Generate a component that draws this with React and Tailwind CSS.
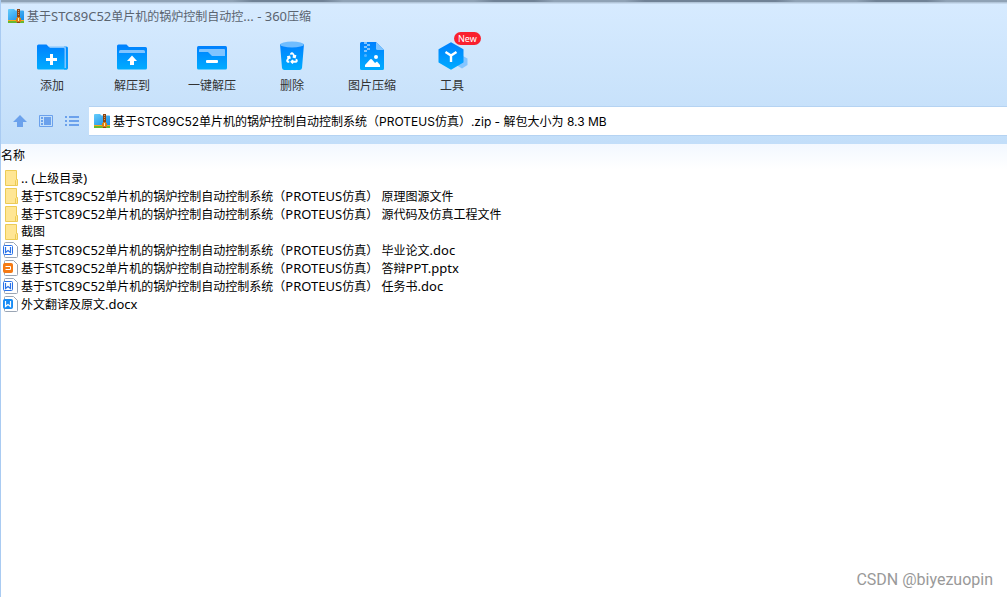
import { useState } from 'react';

const ZipIcon = () => (
  <svg width="16" height="16" viewBox="0 0 16 16" className="shrink-0" aria-hidden="true">
    <defs>
      <linearGradient id="zipBlue" x1="0" y1="0" x2="1" y2="1">
        <stop offset="0" stopColor="#66cdfb" />
        <stop offset="1" stopColor="#158ae6" />
      </linearGradient>
    </defs>
    <path d="M0 2a1 1 0 0 1 1-1h5l1.5 1.5H15a1 1 0 0 1 1 1V12H0z" fill="url(#zipBlue)" />
    <path d="M0 12h16v1H0z" fill="#f6a81c" />
    <path d="M0 13h16v2H0z" fill="#66b82e" />
    <path d="M9 1h3v14H9z" fill="#8b4513" />
    <path d="M10 2h1v1h-1zM10 4h1v1h-1zM10 6h1v1h-1z" fill="#d99a5e" />
    <path d="M9 9h3v1h1v4H8v-4h1z" fill="#d97f16" />
    <path d="M10 10h1v3h-1z" fill="#fff0b3" />
  </svg>
);

const IconDefs = () => (
  <svg width="0" height="0" className="absolute" aria-hidden="true">
    <defs>
      <linearGradient id="toolBlue" x1="0" y1="0" x2="0" y2="1">
        <stop offset="0" stopColor="#0080fe" />
        <stop offset="1" stopColor="#00acff" />
      </linearGradient>
    </defs>
  </svg>
);

const icons = {
  add: (
    <>
      <path d="M28 4.5h2.5A1.5 1.5 0 0 1 32 6v20a1.5 1.5 0 0 1-1.5 1.5H28z" fill="#0a97ff" />
      <path d="M1 4a1.5 1.5 0 0 1 1.5-1.5h8L13 5h17a1 1 0 0 1 1 1v21.5H2.5A1.5 1.5 0 0 1 1 26z" fill="url(#toolBlue)" />
      <path d="M12.5 4.5h16A1.5 1.5 0 0 1 30 6v20h-1.5V7a1 1 0 0 0-1-1H14z" fill="#80c4ff" />
      <path d="M14 12h3v4h4v3h-4v4h-3v-4h-4v-3h4z" fill="#fff" />
    </>
  ),
  extract: (
    <>
      <path d="M1 4a1.5 1.5 0 0 1 1.5-1.5h8L13 5h16.5A1.5 1.5 0 0 1 31 6.5V26a1.5 1.5 0 0 1-1.5 1.5h-27A1.5 1.5 0 0 1 1 26z" fill="url(#toolBlue)" />
      <path d="M3 11V9.5A1.5 1.5 0 0 1 4.5 8h23A1.5 1.5 0 0 1 29 9.5V11z" fill="#80c4ff" />
      <path d="m16 13.5 5 5.5h-3v4h-4v-4h-3z" fill="#fff" />
    </>
  ),
  oneKey: (
    <>
      <rect x="1" y="4" width="30" height="23.5" rx="1.5" fill="url(#toolBlue)" />
      <path d="M3 10V8a1 1 0 0 1 1-1h24a1 1 0 0 1 1 1v6H16l-4-4z" fill="#80c4ff" />
      <rect x="10" y="18" width="12" height="3" rx="1" fill="#fff" />
    </>
  ),
  remove: (
    <>
      <path d="M4 2h24l-2 24a2.5 2.5 0 0 1-2.5 2h-15A2.5 2.5 0 0 1 6 26z" fill="url(#toolBlue)" />
      <ellipse cx="16" cy="2.5" rx="12" ry="3" fill="#70bdff" />
      <g transform="translate(9.5 9.5) scale(.54)" fill="none" stroke="#fff" strokeWidth="3.4">
        <path d="M7 19H4.815a1.83 1.83 0 0 1-1.57-.881 1.785 1.785 0 0 1-.004-1.784L7.196 9.5" />
        <path d="M11 19h8.203a1.83 1.83 0 0 0 1.556-.89 1.784 1.784 0 0 0 0-1.775l-1.226-2.12" />
        <path d="m14 16-3 3 3 3M8.293 13.596 7.196 9.5 3.1 10.598" />
        <path d="m9.344 5.811 1.093-1.892A1.83 1.83 0 0 1 11.985 3a1.784 1.784 0 0 1 1.546.888l3.943 6.843" />
        <path d="m13.378 9.633 4.096 1.098 1.097-4.096" />
      </g>
    </>
  ),
  image: (
    <>
      <path d="M4 1.5A1.5 1.5 0 0 1 5.5 0H20l8 8v18.5a1.5 1.5 0 0 1-1.5 1.5h-21A1.5 1.5 0 0 1 4 26.5z" fill="url(#toolBlue)" />
      <path d="M20 0l8 8h-6.5A1.5 1.5 0 0 1 20 6.5z" fill="#80c4ff" />
      <path d="M8 0h3v2H8zM11 2h3v2h-3zM8 4h3v2H8zM11 6h3v2h-3zM8 8h3v2H8z" fill="#80c4ff" />
      <circle cx="9.5" cy="13.5" r="1.5" fill="#4db2ff" />
      <circle cx="20" cy="15" r="2" fill="#fff" />
      <path d="M9 25v-2l5-5.5q1-1 2 0l3 3.5 2-1.5 3 3.5v2z" fill="#fff" />
    </>
  ),
  tools: (
    <>
      <path d="m26 13.5 5.5 3V23L26 26.5l-5-3z" fill="#85c5ff" />
      <path d="M14.5.5q.5-.3 1 0L27 7q.5.3.5.8V20q0 .5-.5.8l-11.5 6.7q-.5.3-1 0L3 20.8q-.5-.3-.5-.8V7.8q0-.5.5-.8z" fill="url(#toolBlue)" />
      <path d="m9.5 10 5.5 3.5 5.5-3.5M15 13.5V20" fill="none" stroke="#fff" strokeWidth="2.4" />
    </>
  ),
};

const tools = [
  { id: 'add', label: '添加' },
  { id: 'extract', label: '解压到' },
  { id: 'oneKey', label: '一键解压' },
  { id: 'remove', label: '删除' },
  { id: 'image', label: '图片压缩' },
  { id: 'tools', label: '工具', badge: 'New' },
];

const files = [
  { type: 'folder', name: '.. (上级目录)' },
  { type: 'folder', name: '基于STC89C52单片机的锅炉控制自动控制系统（PROTEUS仿真） 原理图源文件' },
  { type: 'folder', name: '基于STC89C52单片机的锅炉控制自动控制系统（PROTEUS仿真） 源代码及仿真工程文件' },
  { type: 'folder', name: '截图' },
  { type: 'doc', name: '基于STC89C52单片机的锅炉控制自动控制系统（PROTEUS仿真） 毕业论文.doc' },
  { type: 'ppt', name: '基于STC89C52单片机的锅炉控制自动控制系统（PROTEUS仿真） 答辩PPT.pptx' },
  { type: 'doc', name: '基于STC89C52单片机的锅炉控制自动控制系统（PROTEUS仿真） 任务书.doc' },
  { type: 'docx', name: '外文翻译及原文.docx' },
];

// Latin runs are set one size larger than the Chinese text around them
const MixedText = ({ text }) => (
  <span className="whitespace-pre">
    {text.split(/([\x20-\x7e]+)/).map((part, i) =>
      i % 2 ? <span key={i} className="text-[13px] leading-4">{part}</span> : part
    )}
  </span>
);

const FileIcon = ({ type }) => {
  if (type === 'folder') {
    return (
      <svg width="15" height="18" viewBox="0 0 15 18" aria-hidden="true">
        <path d="M2.5 1.5h11v9h1v6h-12z" fill="#ffe694" stroke="#eccb55" />
        <path d="M12.5 16v-4.5l1-1" fill="none" stroke="#eccb55" />
      </svg>
    );
  }
  const solid = type !== 'doc';
  const color = type === 'ppt' ? '#f57a14' : type === 'docx' ? '#168bf5' : '#2a72e8';
  return (
    <svg width="15" height="18" viewBox="0 0 15 18" aria-hidden="true">
      <path d="M1.5 2.5q0-1 1-1h8l4 4v10q0 1-1 1h-11q-1 0-1-1z" fill="#fff" stroke="#9aa5b4" />
      <rect x=".5" y="4.5" width="9" height="9" rx="1" fill={solid ? color : '#fff'} stroke={color} />
      {type === 'ppt' ? (
        <path d="M2.5 7.5h5v3h-5" fill="none" stroke="#fff" />
      ) : (
        <path d="M2.5 6v5.5L5 9.5l2.5 2V6" fill="none" stroke={solid ? '#fff' : color} strokeWidth="1.2" />
      )}
    </svg>
  );
};

const App = () => {
  const [selected, setSelected] = useState(null);

  return (
    <div className="relative min-h-screen bg-white border-l border-[#a9cbf2] font-['Noto_Sans','Noto_Sans_CJK_SC',sans-serif] text-xs text-black">
      <IconDefs />

      {/* Header */}
      <header className="bg-linear-to-b from-[#d7ebff] to-[#c2def9]">
        {/* Shadow along the top edge */}
        <div className="h-0.5 bg-[linear-gradient(90deg,#8fa2b5_23%,#708296_25%_32%,#8fa2b5_34%_47%,#708296_49%_53%,#8fa2b5_55%_62%,#708296_64%_77%,#8fa2b5_79%_85%,#708296_87%_92%,#8fa2b5_94%)]"></div>
        <div className="h-0.5 bg-linear-to-b from-[#a9bccf] to-[#cfe3f7]"></div>

        <div className="flex items-center gap-[3px] h-6 pl-[7px] text-[#5a6470]">
          <ZipIcon />
          <h1><MixedText text="基于STC89C52单片机的锅炉控制自动控... - 360压缩" /></h1>
        </div>

        {/* Toolbar */}
        <div className="flex pl-[11px] pt-3.5 pb-3">
          {tools.map((tool) => (
            <button key={tool.id} className="w-20 flex flex-col items-center gap-1.5 text-[#333]">
              <span className="relative">
                <svg width="32" height="30" viewBox="0 0 32 30" className="overflow-visible" aria-hidden="true">
                  {icons[tool.id]}
                </svg>
                {tool.badge && (
                  <span className="absolute -top-2.5 left-[18px] h-[13px] px-1 rounded-full bg-[#f9202e] text-white text-[9px] leading-[13px]">
                    {tool.badge}
                  </span>
                )}
              </span>
              <span className="leading-4">{tool.label}</span>
            </button>
          ))}
        </div>

        {/* Address bar */}
        <div className="flex items-center pb-2">
          <div className="flex items-center gap-3 w-[88px] pl-3 text-[#6ba1ec]">
            <button aria-label="上级目录">
              <svg width="14" height="14" viewBox="0 0 14 14"><path d="M7 1l7 7h-4v5H4V8H0z" fill="currentColor" /></svg>
            </button>
            <button aria-label="预览">
              <svg width="14" height="14" viewBox="0 0 14 14">
                <path d="M.5 1.5h13v11H.5z" fill="none" stroke="currentColor" />
                <path d="M2 3h2v2H2zM2 6h2v2H2zM2 9h2v2H2zM5 3h7v8H5z" fill="currentColor" />
              </svg>
            </button>
            <button aria-label="列表">
              <svg width="14" height="14" viewBox="0 0 14 14">
                <path d="M0 2h2v2H0zM0 6h2v2H0zM0 10h2v2H0zM4 2h10v2H4zM4 6h10v2H4zM4 10h10v2H4z" fill="currentColor" />
              </svg>
            </button>
          </div>
          <div className="flex-1 flex items-center gap-[3px] h-[30px] px-[5px] bg-white border-y border-[#b5d3f2]">
            <ZipIcon />
            <input
              aria-label="路径"
              readOnly
              className="flex-1 min-w-0 pt-0.5 outline-none font-['Inter','Noto_Sans_CJK_SC',sans-serif]"
              value="基于STC89C52单片机的锅炉控制自动控制系统（PROTEUS仿真）.zip - 解包大小为 8.3 MB"
            />
          </div>
        </div>
      </header>

      {/* File list */}
      <table className="w-full">
        <thead>
          <tr className="bg-linear-to-b from-[#f2f8ff] to-white">
            <th className="h-[25px] p-0 pb-0.5 text-left font-normal">名称</th>
          </tr>
        </thead>
        <tbody>
          {files.map((file) => (
            <tr key={file.name} onClick={() => setSelected(file.name)} className={selected === file.name ? 'bg-[#cce8ff]' : ''}>
              <td className="p-0">
                <div className="flex items-center gap-[3px] h-[18px] pl-0.5">
                  <FileIcon type={file.type} />
                  <MixedText text={file.name} />
                </div>
              </td>
            </tr>
          ))}
        </tbody>
      </table>

      <div className="absolute bottom-[7px] right-[14px] font-['Roboto',sans-serif] text-base leading-5 text-[#999]">
        CSDN @biyezuopin
      </div>
    </div>
  );
};

export default App;
